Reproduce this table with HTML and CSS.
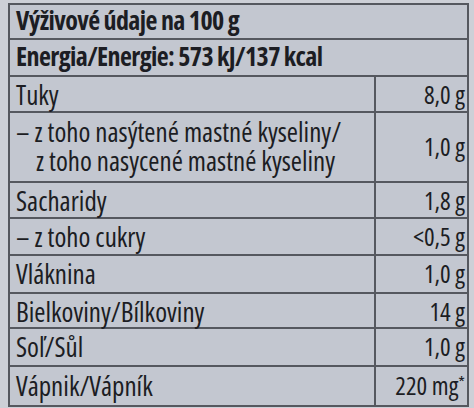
FILE: index.html
```html
<!DOCTYPE html>
<html lang="sk">
<head>
<meta charset="utf-8">
<title>Výživové údaje</title>
<link rel="stylesheet" href="styles.css">
</head>
<body>
<div class="label">
  <div class="row head h35"><span class="name">Výživové údaje na 100 g</span></div>
  <div class="row head h37"><span class="name">Energia/Energie: 573 kJ/137 kcal</span></div>
  <div class="row h36"><span class="name">Tuky</span><span class="val">8,0 g</span></div>
  <div class="row h70"><span class="name"><span class="lines">– z toho nasýtené mastné kyseliny/<br>z toho nasycené mastné kyseliny</span></span><span class="val">1,0 g</span></div>
  <div class="row h36"><span class="name">Sacharidy</span><span class="val">1,8 g</span></div>
  <div class="row h37"><span class="name">– z toho cukry</span><span class="val">&lt;0,5 g</span></div>
  <div class="row h38"><span class="name">Vláknina</span><span class="val">1,0 g</span></div>
  <div class="row h35"><span class="name">Bielkoviny/Bílkoviny</span><span class="val">14 g</span></div>
  <div class="row h38"><span class="name">Soľ/Sůl</span><span class="val">1,0 g</span></div>
  <div class="row h39 last"><span class="name">Vápnik/Vápník</span><span class="val">220 mg<sup>*</sup></span></div>
</div>
</body>
</html>
```

FILE: styles.css
```css
html, body {
  margin: 0;
  padding: 0;
}
body {
  width: 474px;
  height: 408px;
  overflow: hidden;
  background: #cdd0d7;
  font-family: "Open Sans", "DejaVu Sans Condensed", sans-serif;
  font-stretch: 75%;
  color: #1c1d23;
}
.label {
  box-sizing: border-box;
  margin: 3px 0 0 8px;
  width: 461px;
  border: 2px solid #55585f;
  background: #c3c7d0;
  display: flex;
  flex-direction: column;
}
.row {
  box-sizing: border-box;
  display: grid;
  grid-template-columns: 366px 1fr;
  border-bottom: 2px solid #55585f;
  font-size: 27px;
  white-space: nowrap;
}
.row.last { border-bottom: none; }
.row.head {
  display: flex;
  align-items: center;
  font-weight: 700;
  font-size: 26px;
  letter-spacing: -0.6px;
}
.name {
  display: flex;
  align-items: center;
  padding-left: 6px;
  padding-bottom: 2px;
  line-height: 29px;
  border-right: 2px solid #55585f;
}
.head .name { border-right: none; }
.lines {
  display: block;
  padding-left: 20px;
  text-indent: -20px;
}
.val {
  display: flex;
  align-items: center;
  justify-content: flex-end;
  padding-right: 2px;
  padding-bottom: 2px;
  font-size: 25px;
}
.val sup {
  font-size: 17px;
  line-height: 1;
  align-self: flex-start;
  margin-top: 6px;
}
.h35 { height: 35px; }
.h36 { height: 36px; }
.h37 { height: 37px; }
.h38 { height: 38px; }
.h39 { height: 38px; }
.h70 { height: 70px; }
```
